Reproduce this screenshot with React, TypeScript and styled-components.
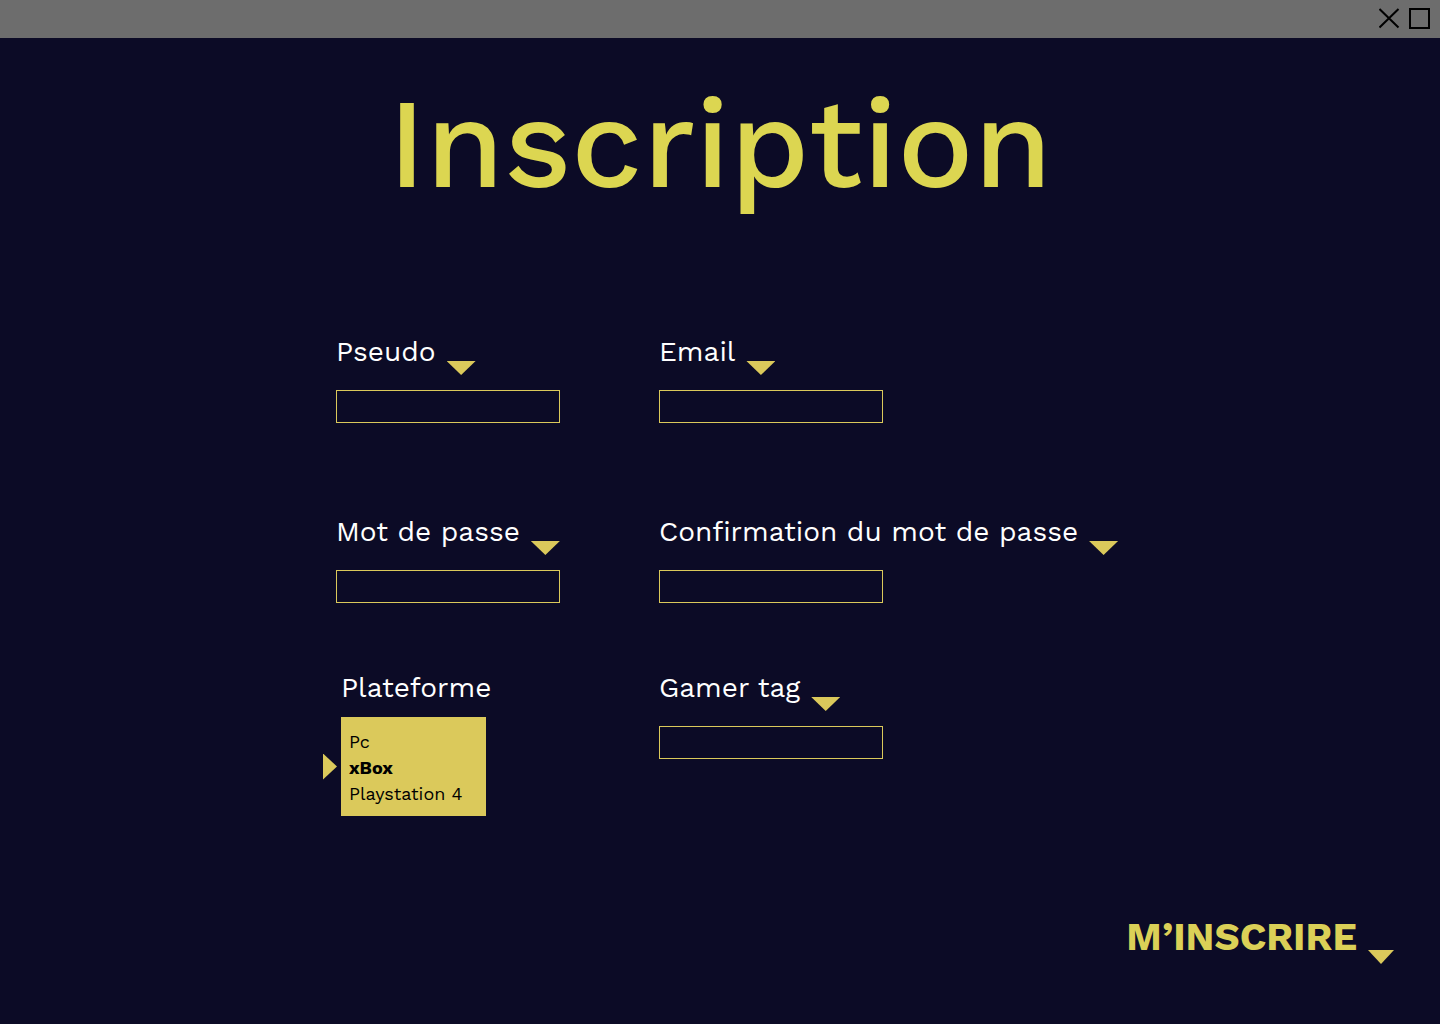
import React, { useState } from "react";
import styled, { createGlobalStyle } from "styled-components";

const color = {
  night: "#0c0b26",
  bar: "#6d6d6d",
  lime: "#dcd651",
  submit: "#dbd057",
  gold: "#dbc95b",
  text: "#ffffff",
  ink: "#000000",
};

const GlobalStyle = createGlobalStyle`
  *, *::before, *::after { box-sizing: border-box; }
  body {
    margin: 0;
    background: ${color.night};
    font-family: "Work Sans", Inter, "Liberation Sans", sans-serif;
  }
`;

const Window = styled.div`
  display: flex;
  flex-direction: column;
  min-height: 100vh;
  color: ${color.text};
`;

const TitleBar = styled.header`
  display: flex;
  justify-content: flex-end;
  align-items: center;
  gap: 8px;
  height: 38px;
  padding: 0 9px;
  background: ${color.bar};
`;

const WindowButton = styled.button`
  display: flex;
  padding: 0;
  border: 0;
  background: none;
  color: ${color.ink};
  cursor: pointer;
`;

const Main = styled.main`
  flex: 1;
  display: flex;
  flex-direction: column;
  padding-bottom: 60px;
`;

const Title = styled.h1`
  margin: 34px 0 0;
  color: ${color.lime};
  font-size: 127px;
  font-weight: 500;
  line-height: 144px;
  text-align: center;
`;

const Form = styled.form`
  flex: 1;
  display: flex;
  flex-direction: column;
`;

const Fields = styled.div`
  display: grid;
  grid-template-columns: 224px 1fr;
  grid-template-rows: 113px auto auto;
  column-gap: 99px;
  row-gap: 67px;
  width: 100%;
  max-width: 768px;
  margin: 118px auto 0;
`;

const FieldBox = styled.div`
  display: flex;
  flex-direction: column;
  align-items: flex-start;
  gap: 15px;
`;

const LabelRow = styled.div`
  display: flex;
  gap: 11px;
  height: 41px;
`;

const Label = styled.label`
  font-size: 28px;
  font-weight: 400;
  line-height: 36px;
  white-space: nowrap;
`;

const ArrowDown = styled.span<{ $width: number }>`
  flex: none;
  align-self: flex-end;
  width: ${(p) => p.$width}px;
  height: 14px;
  background: ${color.gold};
  clip-path: polygon(0 0, 100% 0, 50% 100%);
`;

const ArrowRight = styled.span`
  flex: none;
  width: 14px;
  height: 26px;
  background: ${color.gold};
  clip-path: polygon(0 0, 100% 50%, 0 100%);
`;

const TextInput = styled.input`
  width: 224px;
  height: 33px;
  padding: 0 8px;
  border: 1px solid ${color.gold};
  border-radius: 0;
  background: transparent;
  color: ${color.text};
  font: inherit;
  font-size: 18px;
`;

const Platform = styled.div`
  display: flex;
  flex-direction: column;
  gap: 11px;
  padding-left: 5px;
`;

const PlatformChoice = styled.div`
  display: flex;
  align-items: center;
  gap: 4px;
  margin-left: -18px;
`;

const PlatformList = styled.select`
  width: 145px;
  height: 99px;
  padding: 14px 0 7px;
  border: 0;
  border-radius: 0;
  outline: none;
  overflow: hidden;
  background: ${color.gold};
  color: ${color.ink};
  font: inherit;
  font-size: 18px;
`;

const PlatformOption = styled.option`
  min-height: 26px;
  padding: 0 8px;
  color: ${color.ink};
  line-height: 26px;

  &:checked {
    background: ${color.gold} linear-gradient(${color.gold}, ${color.gold});
    color: ${color.ink};
    font-weight: 700;
  }
`;

const Submit = styled.button`
  display: flex;
  align-self: flex-end;
  gap: 11px;
  height: 54px;
  margin: auto 46px 0 0;
  padding: 0;
  border: 0;
  background: none;
  color: ${color.submit};
  font: inherit;
  font-size: 39px;
  font-weight: 700;
  line-height: 54px;
  cursor: pointer;
`;

function Field({ id, label, type = "text" }: { id: string; label: string; type?: string }) {
  return (
    <FieldBox>
      <LabelRow>
        <Label htmlFor={id}>{label}</Label>
        <ArrowDown $width={29} />
      </LabelRow>
      <TextInput id={id} name={id} type={type} />
    </FieldBox>
  );
}

export default function App() {
  const [platform, setPlatform] = useState("xBox");

  return (
    <>
      <GlobalStyle />
      <Window>
        <TitleBar>
          <WindowButton type="button" aria-label="Fermer">
            <svg width="22" height="22" viewBox="0 0 22 22" fill="none" stroke="currentColor" strokeWidth="2">
              <path d="M.5 1 19.500 19.500M19.500 1 .5 19.500" />
            </svg>
          </WindowButton>
          <WindowButton type="button" aria-label="Agrandir">
            <svg width="22" height="22" viewBox="0 0 22 22" fill="none" stroke="currentColor" strokeWidth="2">
              <rect x="1" y="1" width="19" height="19" />
            </svg>
          </WindowButton>
        </TitleBar>
        <Main>
          <Title>Inscription</Title>
          <Form onSubmit={(e) => e.preventDefault()}>
            <Fields>
              <Field id="pseudo" label="Pseudo" />
              <Field id="email" label="Email" type="email" />
              <Field id="password" label="Mot de passe" type="password" />
              <Field id="confirmation" label="Confirmation du mot de passe" type="password" />
              <Platform>
                <Label htmlFor="platform">Plateforme</Label>
                <PlatformChoice>
                  <ArrowRight />
                  <PlatformList
                    id="platform"
                    size={3}
                    value={platform}
                    onChange={(e) => setPlatform(e.target.value)}
                  >
                    {["Pc", "xBox", "Playstation 4"].map((name) => (
                      <PlatformOption key={name} value={name}>
                        {name}
                      </PlatformOption>
                    ))}
                  </PlatformList>
                </PlatformChoice>
              </Platform>
              <Field id="gamertag" label="Gamer tag" />
            </Fields>
            <Submit type="submit">
              M’INSCRIRE
              <ArrowDown $width={26} />
            </Submit>
          </Form>
        </Main>
      </Window>
    </>
  );
}
